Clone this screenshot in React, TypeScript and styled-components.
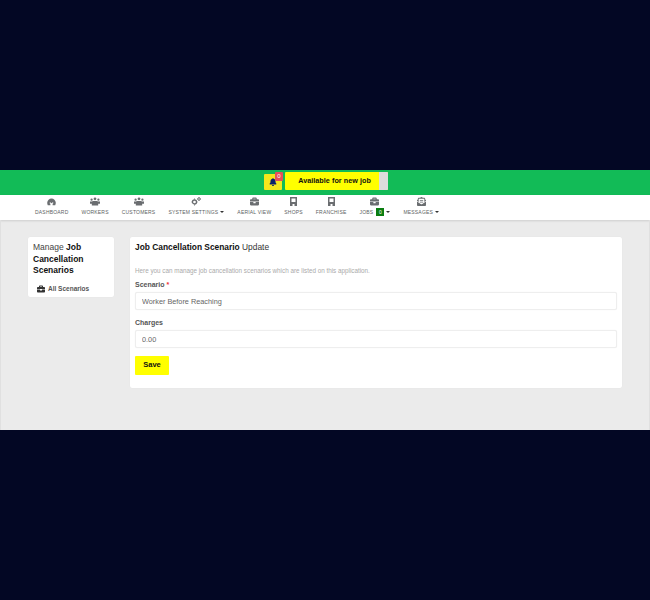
import React from "react"
import styled, { createGlobalStyle } from "styled-components"
import { FaBell, FaBriefcase, FaEnvelopeOpenText } from "react-icons/fa"

const GlobalStyle = createGlobalStyle`
	html, body {
		margin: 0;
		padding: 0;
		background: #030724;
	}
	* {
		box-sizing: border-box;
	}
`

function DashboardIcon() {
	return <svg width="9" height="8" viewBox="0 0 20 16" fill="currentColor">
		<path d="M10 0C5 0 1 4 .5 9c-.2 2 .3 4 1.200 6H7.500v-3l-2-2 1.500-1.500L10 11l3-2.500 1.500 1.500-2 2v3h5.800c.9-2 1.400-4 1.200-6C19 4 15 0 10 0z" />
	</svg>
}

function UsersIcon() {
	return <svg width="10" height="9" viewBox="0 0 22 18" fill="currentColor">
		<circle cx="11" cy="3" r="3" />
		<circle cx="3.500" cy="5" r="2.500" />
		<circle cx="18.500" cy="5" r="2.500" />
		<path d="M0 9h5l1-1h10l1 1h5v5h-4v4H4v-4H0z" />
	</svg>
}

function GearsIcon() {
	return <svg width="10" height="9" viewBox="0 0 20 18" fill="none" stroke="currentColor">
		<circle cx="7" cy="10" r="4" strokeWidth="2.6" />
		<circle cx="16" cy="4" r="2.500" strokeWidth="2" />
		<path d="M7 3v2M7 15v2M1 10h2M11 10h2M16 0v1M16 7v1M12 4h1M19 4h1" strokeWidth="1.800" />
	</svg>
}

function ShopIcon() {
	return <svg width="7" height="9" viewBox="0 0 14 18" fill="currentColor">
		<path d="M0 0h14v18H9v-4H5v4H0zM3 3v7h8V3z" />
	</svg>
}

type NavEntry = {
	label: string
	icon: React.ReactNode
	caret?: boolean
	badge?: string
}

const NAV: NavEntry[] = [
	{ label: "DASHBOARD", icon: <DashboardIcon /> },
	{ label: "WORKERS", icon: <UsersIcon /> },
	{ label: "CUSTOMERS", icon: <UsersIcon /> },
	{ label: "SYSTEM SETTINGS", icon: <GearsIcon />, caret: true },
	{ label: "AERIAL VIEW", icon: <FaBriefcase /> },
	{ label: "SHOPS", icon: <ShopIcon /> },
	{ label: "FRANCHISE", icon: <ShopIcon /> },
	{ label: "JOBS", icon: <FaBriefcase />, caret: true, badge: "0" },
	{ label: "MESSAGES", icon: <FaEnvelopeOpenText />, caret: true },
]

export default function App() {
	return <>
		<GlobalStyle />
		<Page>
			<Frame>
				<TopBar>
					<BellButton>
						<FaBell />
						<BellBadge>0</BellBadge>
					</BellButton>
					<AvailableToggle>
						<AvailableLabel>Available for new job</AvailableLabel>
						<ToggleKnob />
					</AvailableToggle>
				</TopBar>
				<Nav>
					{NAV.map(n => (
						<NavItem key={n.label}>
							<NavIcon>{n.icon}</NavIcon>
							<NavLabel>
								{n.label}
								{n.badge && <NavBadge>{n.badge}</NavBadge>}
								{n.caret && <Caret />}
							</NavLabel>
						</NavItem>
					))}
				</Nav>
				<Content>
					<SideCard>
						<SideTitle>Manage <b>Job Cancellation Scenarios</b></SideTitle>
						<SideLink><FaBriefcase />All Scenarios</SideLink>
					</SideCard>
					<MainCard>
						<MainTitle><b>Job Cancellation Scenario</b> Update</MainTitle>
						<Hint>Here you can manage job cancellation scenarios which are listed on this application.</Hint>
						<Field>
							<Label>Scenario <Required>*</Required></Label>
							<Input readOnly value="Worker Before Reaching" />
						</Field>
						<Field>
							<Label>Charges</Label>
							<Input readOnly value="0.00" />
						</Field>
						<SaveButton>Save</SaveButton>
					</MainCard>
				</Content>
			</Frame>
		</Page>
	</>
}

const Page = styled("div")`
	width: 650px;
	height: 600px;
	display: flex;
	flex-direction: column;
	justify-content: center;
	font-family: "Liberation Sans", Arial, sans-serif;
`
const Frame = styled("div")`
	height: 260px;
	display: flex;
	flex-direction: column;
	background: #ebebeb;
`
const TopBar = styled("div")`
	height: 25px;
	background: #12bb57;
	display: flex;
	align-items: flex-end;
	justify-content: center;
	gap: 3px;
	padding: 0 0 5px 2px;
`
const BellButton = styled("div")`
	position: relative;
	width: 18px;
	height: 16px;
	background: #f5e71c;
	color: #0a1f6b;
	border-radius: 1px;
	display: flex;
	align-items: center;
	justify-content: center;
	font-size: 8px;
`
const BellBadge = styled("span")`
	position: absolute;
	right: -1px;
	top: -2px;
	width: 8px;
	height: 9px;
	background: #e6505a;
	color: #fff;
	border-radius: 1px;
	font-size: 6px;
	line-height: 9px;
	text-align: center;
`
const AvailableToggle = styled("div")`
	width: 103px;
	height: 18px;
	display: flex;
	background: #ffff00;
	border-radius: 1px;
	overflow: hidden;
`
const AvailableLabel = styled("div")`
	flex: 1;
	padding-left: 5px;
	font-size: 7.2px;
	font-weight: 700;
	letter-spacing: 0.05px;
	line-height: 18px;
	text-align: center;
	color: #111;
`
const ToggleKnob = styled("div")`
	width: 9px;
	background: #dcdcdc;
`
const Nav = styled("div")`
	height: 25px;
	background: #fff;
	display: flex;
	padding-left: 35px;
	gap: 13px;
	box-shadow: 0 1px 2px rgba(0, 0, 0, 0.12);
`
const NavItem = styled("div")`
	display: flex;
	flex-direction: column;
	align-items: center;
	padding-top: 2px;
`
const NavIcon = styled("div")`
	display: flex;
	align-items: center;
	height: 9px;
	font-size: 9px;
	line-height: 9px;
	color: #6a6d70;
	svg {
		display: block;
	}
`
const NavLabel = styled("div")`
	margin-top: 2px;
	display: flex;
	align-items: center;
	height: 8px;
	font-size: 5px;
	letter-spacing: 0.2px;
	color: #5c5f63;
	white-space: nowrap;
`
const NavBadge = styled("span")`
	width: 8px;
	height: 8px;
	margin-left: 3px;
	background: #0a7d10;
	color: #fff;
	font-size: 5px;
	line-height: 8px;
	text-align: center;
`
const Caret = styled("span")`
	margin-left: 2px;
	border-left: 2px solid transparent;
	border-right: 2px solid transparent;
	border-top: 2px solid #333;
`
const Content = styled("div")`
	flex: 1;
	display: flex;
	align-items: flex-start;
	gap: 16px;
	padding: 17px 27px 0;
	border-left: 1px solid #e0e0e0;
	border-right: 1px solid #e0e0e0;
`
const SideCard = styled("div")`
	width: 86px;
	height: 60px;
	flex-shrink: 0;
	background: #fff;
	border-radius: 2px;
	padding: 5px 5px 0;
	box-shadow: 0 0 1px rgba(0, 0, 0, 0.08);
`
const SideTitle = styled("div")`
	font-size: 8.5px;
	line-height: 11.5px;
	color: #444;
	b {
		font-weight: 700;
		color: #111;
	}
`
const SideLink = styled("div")`
	display: flex;
	align-items: center;
	gap: 3px;
	margin-top: 8px;
	padding-left: 4px;
	font-size: 6.5px;
	font-weight: 700;
	color: #555;
	svg {
		font-size: 8px;
		color: #333;
	}
`
const MainCard = styled("div")`
	flex: 1;
	height: 151px;
	background: #fff;
	border-radius: 2px;
	padding: 5px 5px 0;
	box-shadow: 0 0 1px rgba(0, 0, 0, 0.08);
`
const MainTitle = styled("div")`
	font-size: 8.4px;
	line-height: 11px;
	color: #333;
	b {
		font-weight: 700;
		color: #111;
	}
`
const Hint = styled("div")`
	margin-top: 13px;
	font-size: 6.3px;
	line-height: 9px;
	color: #aaa;
`
const Field = styled("div")`
	margin-top: 5px;
	& + & {
		margin-top: 8px;
	}
`
const Label = styled("div")`
	font-size: 7px;
	line-height: 9px;
	font-weight: 700;
	color: #555;
`
const Required = styled("span")`
	color: #e33;
`
const Input = styled("input")`
	display: block;
	width: 100%;
	height: 18px;
	margin-top: 3px;
	padding: 0 6px;
	border: 1px solid #eee;
	border-radius: 2px;
	outline: none;
	font-family: inherit;
	font-size: 7.3px;
	color: #666;
	background: #fff;
	box-shadow: 0 0 1px rgba(0, 0, 0, 0.08);
`
const SaveButton = styled("div")`
	width: 34px;
	height: 18.5px;
	margin-top: 8px;
	background: #ffff00;
	border-radius: 1px;
	font-size: 7.5px;
	font-weight: 700;
	line-height: 18.5px;
	text-align: center;
	color: #111;
`
